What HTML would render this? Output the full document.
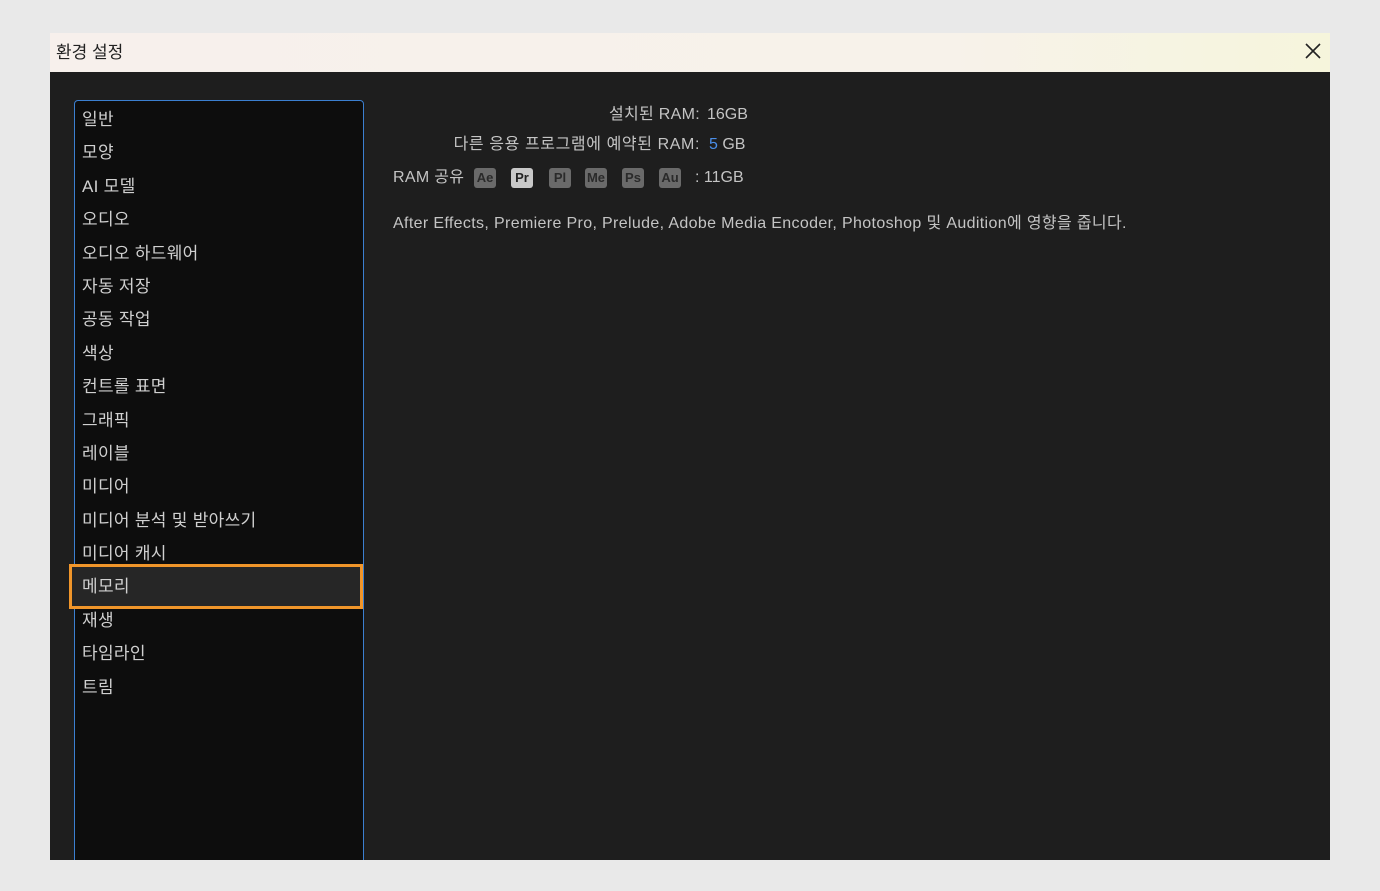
<!DOCTYPE html><html><head><meta charset="utf-8"><style>
body{margin:0;width:1380px;height:891px;background:#e9e9e9;font-family:"Liberation Sans","Noto Sans CJK KR",sans-serif;position:relative;overflow:hidden}
.dlg{position:absolute;left:50px;top:33px;width:1280px;height:827px;background:#1e1e1e;overflow:hidden}
.tb{position:absolute;left:0;top:0;width:1280px;height:39px;background:linear-gradient(90deg,#f7f0ec,#f7f2ea 70%,#f6f5dc);}
.tb span{position:absolute;left:6px;top:5px;font-size:17px;color:#222}
.list{position:absolute;left:24px;top:67px;width:288px;height:800px;background:#0d0d0d;border:1.5px solid #3b7fd0;border-radius:4px}
.it{position:absolute;left:7px;font-size:17px;color:#d0d0d0;line-height:20px;letter-spacing:0.3px;margin-top:2px}
.sel{position:absolute;left:19px;top:531px;width:288px;height:39px;border:3px solid #f0952a;background:#262626}
.t{position:absolute;font-size:16px;color:#c4c4c4;white-space:nowrap;line-height:20px;margin-top:2px}
.b{position:absolute;top:135px;width:22px;height:20px;background:#6a6a6a;color:#2a2a2a;font-size:13px;font-weight:bold;text-align:center;line-height:20px;border-radius:3px}
</style></head><body>
<div class="dlg">
<div class="tb"><span>환경 설정</span>
<svg style="position:absolute;left:1255px;top:10px" width="16" height="16"><path d="M1 1L15 15M15 1L1 15" stroke="#222" stroke-width="1.6"/></svg></div>
<div class="list">
<div class="it" style="top:7px">일반</div>
<div class="it" style="top:40px">모양</div>
<div class="it" style="top:74px">AI 모델</div>
<div class="it" style="top:107px">오디오</div>
<div class="it" style="top:141px">오디오 하드웨어</div>
<div class="it" style="top:174px">자동 저장</div>
<div class="it" style="top:207px">공동 작업</div>
<div class="it" style="top:241px">색상</div>
<div class="it" style="top:274px">컨트롤 표면</div>
<div class="it" style="top:308px">그래픽</div>
<div class="it" style="top:341px">레이블</div>
<div class="it" style="top:374px">미디어</div>
<div class="it" style="top:408px">미디어 분석 및 받아쓰기</div>
<div class="it" style="top:441px">미디어 캐시</div>
<div class="it" style="top:508px">재생</div>
<div class="it" style="top:541px">타임라인</div>
<div class="it" style="top:575px">트림</div>
</div>
<div class="sel"><div class="it" style="left:10px;top:8px">메모리</div></div>
<div class="t" style="right:630px;top:70px;letter-spacing:0.3px">설치된 RAM:</div><div class="t" style="left:657px;top:70px">16GB</div>
<div class="t" style="right:630px;top:100px;letter-spacing:0.6px">다른 응용 프로그램에 예약된 RAM:</div><div class="t" style="left:659px;top:100px"><span style="color:#4a8ee8">5</span> GB</div>
<div class="t" style="left:343px;top:133px;letter-spacing:0.3px">RAM 공유</div>
<div class="b" style="left:424px">Ae</div>
<div class="b" style="left:461px;background:#c8c8c8;color:#222">Pr</div>
<div class="b" style="left:499px">Pl</div>
<div class="b" style="left:535px">Me</div>
<div class="b" style="left:572px">Ps</div>
<div class="b" style="left:609px">Au</div>
<div class="t" style="left:645px;top:133px">: 11GB</div>
<div class="t" style="left:343px;top:179px;letter-spacing:0.35px">After Effects, Premiere Pro, Prelude, Adobe Media Encoder, Photoshop 및 Audition에 영향을 줍니다.</div>
</div>
</body></html>
